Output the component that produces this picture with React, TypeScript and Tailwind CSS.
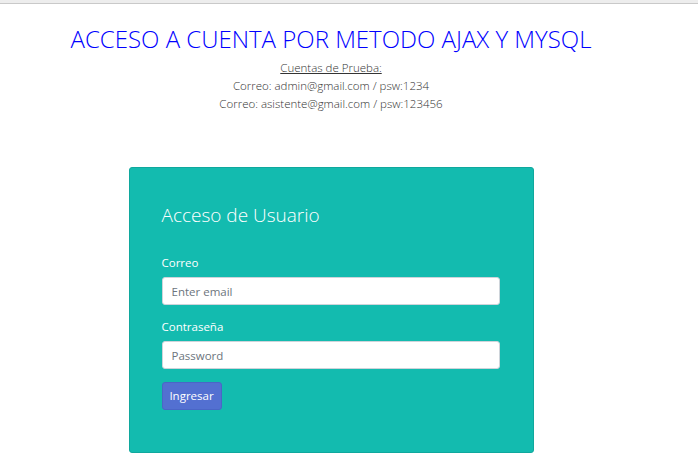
import React from "react";

export default function App() {
  const font = { fontFamily: '"Open Sans", "Noto Sans", sans-serif' };
  return (
    <div className="w-[698px] h-[461px] bg-white overflow-hidden" style={font}>
      <div className="h-[3px] bg-[#ededed] border-b border-[#c9c9c9] box-content" />
      <div className="w-[662px] flex flex-col items-center">
        <h1 className="mt-[19px] text-[24px] leading-[32px] font-light text-[#0000ff]">
          ACCESO A CUENTA POR METODO AJAX Y MYSQL
        </h1>
        <div className="mt-[4px] flex flex-col items-center text-[11.5px] leading-[18px] text-[#333] font-light">
          <span className="underline">Cuentas de Prueba:</span>
          <span>Correo: admin@gmail.com / psw:1234</span>
          <span>Correo: asistente@gmail.com / psw:123456</span>
        </div>
        <div className="mt-[54px] w-[405px] h-[286px] bg-[#13bbaf] border border-[#10a89d] rounded-[3px] px-[32px] pt-[33px]">
          <h2 className="text-[19px] leading-[28px] font-light text-white">Acceso de Usuario</h2>
          <form className="mt-[26px]">
            <label className="block text-[11.5px] leading-[16px] text-white">Correo</label>
            <input
              className="mt-[6px] block w-[338px] h-[28px] bg-white border border-[#ced4da] rounded-[3px] px-[9px] text-[11.5px] text-[#495057] placeholder:text-[#6c757d] outline-none"
              placeholder="Enter email"
            />
            <label className="mt-[14px] block text-[11.5px] leading-[16px] text-white">Contraseña</label>
            <input
              type="password"
              className="mt-[6px] block w-[338px] h-[28px] bg-white border border-[#ced4da] rounded-[3px] px-[9px] text-[11.5px] text-[#495057] placeholder:text-[#6c757d] outline-none"
              placeholder="Password"
            />
            <button
              type="button"
              className="mt-[13px] block w-[60px] h-[28px] bg-[#5370d1] border border-[#4a66c6] rounded-[3px] text-white text-[11.5px]"
            >
              Ingresar
            </button>
          </form>
        </div>
      </div>
    </div>
  );
}
